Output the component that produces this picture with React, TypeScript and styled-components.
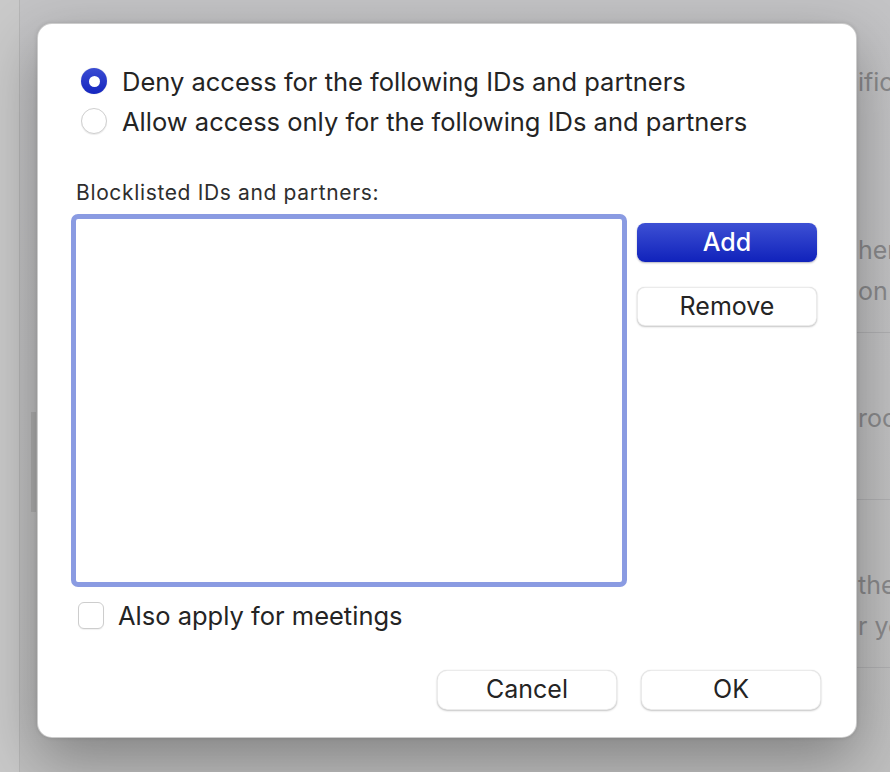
import styled, { createGlobalStyle } from "styled-components";

const GlobalStyle = createGlobalStyle`
  html, body {
    margin: 0;
    padding: 0;
    width: 890px;
    height: 772px;
    overflow: hidden;
    font-family: Inter, "Noto Sans", "Liberation Sans", sans-serif;
  }
`;

const Page = styled.div`
  position: relative;
  width: 890px;
  height: 772px;
  display: grid;
  grid-template-columns: 20px 1fr;
  background: #c6c6c8;
  overflow: hidden;
`;

const Sidebar = styled.div`
  background: #c9c9c9;
  border-right: 1px solid #b6b6b6;
`;

const Main = styled.div`
  position: relative;
  display: flex;
  flex-direction: column;
  background: linear-gradient(180deg, #c3c3c5 0%, #bfbfbf 100%);
`;

const Section = styled.div<{ $h: number; $align: string; $pt?: number; $pb?: number; $line?: boolean }>`
  position: relative;
  height: ${(p) => p.$h}px;
  box-sizing: border-box;
  display: flex;
  flex-direction: column;
  justify-content: ${(p) => p.$align};
  gap: 13px;
  padding: ${(p) => p.$pt ?? 0}px 0 ${(p) => p.$pb ?? 0}px 838px;
  white-space: nowrap;
  font-size: 25px;
  line-height: 28px;
  color: #89898b;

  &::after {
    content: "";
    display: ${(p) => (p.$line ? "block" : "none")};
    position: absolute;
    left: 300px;
    right: 0;
    bottom: 0;
    height: 1px;
    background: #b0b0b2;
  }
`;

const Thumb = styled.div`
  position: absolute;
  left: 11px;
  top: 412px;
  width: 5px;
  height: 100px;
  background: #b0b0b0;
`;

const Dialog = styled.div`
  position: absolute;
  left: 37px;
  top: 23px;
  width: 820px;
  height: 715px;
  box-sizing: border-box;
  background: #ffffff;
  border-radius: 15px;
  border: 1px solid rgba(0, 0, 0, 0.2);
  box-shadow: 0 22px 60px rgba(0, 0, 0, 0.32), 0 0 4px rgba(0, 0, 0, 0.12);
  padding: 37px 35px 28px 33px;
  display: flex;
  flex-direction: column;
  color: #242424;
`;

const RadioGroup = styled.div`
  display: flex;
  flex-direction: column;
  margin-left: 10px;
`;

const RadioRow = styled.label`
  height: 40px;
  display: flex;
  align-items: center;
  gap: 15px;
  font-size: 25.5px;
`;

const RadioDot = styled.span<{ $on?: boolean }>`
  width: 26px;
  height: 26px;
  flex: none;
  box-sizing: border-box;
  border-radius: 50%;
  display: flex;
  align-items: center;
  justify-content: center;
  background: ${(p) =>
    p.$on ? "linear-gradient(180deg, #3a4cd2 0%, #1526bf 100%)" : "#ffffff"};
  border: ${(p) => (p.$on ? "none" : "1px solid #cfcfcf")};
  box-shadow: ${(p) => (p.$on ? "0 0 1px rgba(0,0,0,0.3)" : "0 1px 1px rgba(0,0,0,0.08)")};

  &::after {
    content: "";
    display: ${(p) => (p.$on ? "block" : "none")};
    width: 11px;
    height: 11px;
    border-radius: 50%;
    background: #ffffff;
  }
`;

const ListLabel = styled.div`
  margin: 40px 0 0 5px;
  height: 24px;
  line-height: 24px;
  font-size: 21px;
  letter-spacing: 0.65px;
  color: #2e2e2e;
`;

const ListRow = styled.div`
  margin-top: 9px;
  display: flex;
  gap: 10px;
`;

const ListBox = styled.div`
  width: 556px;
  height: 373px;
  box-sizing: border-box;
  border: 5px solid #8a9be2;
  border-radius: 7px;
  background: #ffffff;
`;

const ButtonColumn = styled.div`
  padding-top: 9px;
  display: flex;
  flex-direction: column;
  gap: 25px;
`;

const Button = styled.button<{ $primary?: boolean }>`
  width: 180px;
  height: 39px;
  border-radius: 8px;
  font-family: inherit;
  font-size: 25px;
  font-weight: ${(p) => (p.$primary ? 500 : 400)};
  color: ${(p) => (p.$primary ? "#ffffff" : "#242424")};
  background: ${(p) =>
    p.$primary ? "linear-gradient(180deg, #3d50d4 0%, #1022bb 100%)" : "#ffffff"};
  border: ${(p) => (p.$primary ? "none" : "1px solid rgba(0,0,0,0.08)")};
  box-shadow: ${(p) =>
    p.$primary
      ? "0 1px 2px rgba(0,0,40,0.3)"
      : "0 1px 2px rgba(0,0,0,0.22), 0 0 1px rgba(0,0,0,0.15)"};
  padding: 0 0 2px;
  cursor: default;
`;

const CheckRow = styled.label`
  margin: 13px 0 0 7px;
  height: 30px;
  display: flex;
  align-items: center;
  gap: 14px;
  font-size: 25.5px;
`;

const CheckBox = styled.span`
  width: 26px;
  height: 27px;
  flex: none;
  box-sizing: border-box;
  border-radius: 6px;
  border: 1px solid #cdcdcd;
  background: #ffffff;
  box-shadow: 0 1px 1px rgba(0, 0, 0, 0.06);
`;

const Footer = styled.div`
  margin-top: 40px;
  display: flex;
  justify-content: flex-end;
  gap: 24px;
`;

const FooterButton = styled(Button)`
  height: 40px;
  border-radius: 10px;
`;

export default function App() {
  return (
    <>
      <GlobalStyle />
      <Page>
        <Sidebar />
        <Main>
          <Section $h={140} $align="flex-start" $pt={68}>
            <span>ific</span>
          </Section>
          <Section $h={193} $align="flex-end" $pb={28} $line>
            <span>her</span>
            <span>on a</span>
          </Section>
          <Section $h={167} $align="center" $pt={2} $line>
            <span>roc</span>
          </Section>
          <Section $h={168} $align="flex-end" $pb={28} $line>
            <span>the</span>
            <span>r yo</span>
          </Section>
          <Thumb />
        </Main>
        <Dialog>
          <RadioGroup>
            <RadioRow>
              <RadioDot $on />
              Deny access for the following IDs and partners
            </RadioRow>
            <RadioRow>
              <RadioDot />
              Allow access only for the following IDs and partners
            </RadioRow>
          </RadioGroup>
          <ListLabel>Blocklisted IDs and partners:</ListLabel>
          <ListRow>
            <ListBox />
            <ButtonColumn>
              <Button $primary>Add</Button>
              <Button>Remove</Button>
            </ButtonColumn>
          </ListRow>
          <CheckRow>
            <CheckBox />
            Also apply for meetings
          </CheckRow>
          <Footer>
            <FooterButton>Cancel</FooterButton>
            <FooterButton>OK</FooterButton>
          </Footer>
        </Dialog>
      </Page>
    </>
  );
}
